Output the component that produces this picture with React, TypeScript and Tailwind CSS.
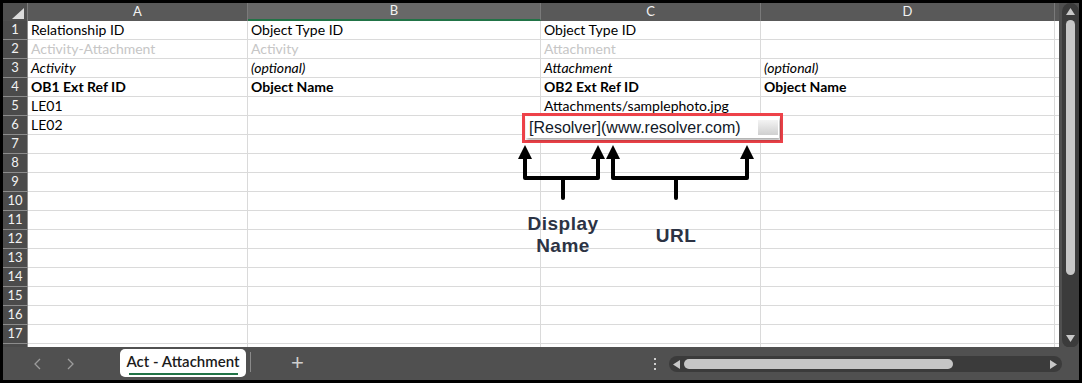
import React from "react";

const cols = [
  { key: "A", w: "w-[220px]" },
  { key: "B", w: "w-[293px]" },
  { key: "C", w: "w-[220px]" },
  { key: "D", w: "w-[294px]" },
];

type Row = { cells: string[]; style: string };

const rows: Row[] = [
  { cells: ["Relationship ID", "Object Type ID", "Object Type ID", ""], style: "text-black" },
  { cells: ["Activity-Attachment", "Activity", "Attachment", ""], style: "text-[#c6c6c6]" },
  { cells: ["Activity", "(optional)", "Attachment", "(optional)"], style: "text-black italic" },
  { cells: ["OB1 Ext Ref ID", "Object Name", "OB2 Ext Ref ID", "Object Name"], style: "text-black font-bold" },
  { cells: ["LE01", "", "Attachments/samplephoto.jpg", ""], style: "text-black" },
  { cells: ["LE02", "", "", ""], style: "text-black" },
];

function HeaderRow() {
  return (
    <div className="flex h-[18px] shrink-0">
      <div className="relative w-[25px] shrink-0 bg-[#4f4f4f] border-r border-[#7a7a7a]">
        <svg className="absolute right-[3px] bottom-[2px]" width="12" height="11" viewBox="0 0 12 11">
          <polygon points="12,0 12,11 0,11" fill="#dcdcdc" />
        </svg>
      </div>
      {cols.map((c) => (
        <div
          key={c.key}
          className={`${c.w} shrink-0 flex items-center justify-center text-[13px] text-[#f2f2f2] border-r border-[#7a7a7a] ${
            c.key === "B" ? "bg-[#686868] border-b-2 border-b-[#217346]" : "bg-[#595959]"
          }`}
        >
          {c.key}
        </div>
      ))}
      <div className="flex-1 bg-[#595959]" />
    </div>
  );
}

function GridRow({ n, row }: { n?: number; row?: Row }) {
  return (
    <div className="flex h-[19px] shrink-0">
      <div className="w-[25px] shrink-0 bg-[#4b4b4b] border-r border-b border-[#8c8c8c] flex items-center justify-center text-[13px] text-[#f2f2f2]">
        {n}
      </div>
      {cols.map((c, i) => (
        <div
          key={c.key}
          className={`${c.w} shrink-0 bg-white border-r border-b border-[#dadada] pl-[3px] flex items-end pb-[1px] text-[14px] leading-[16px] whitespace-nowrap overflow-hidden ${row?.style ?? ""}`}
        >
          {row?.cells[i] ?? ""}
        </div>
      ))}
      <div className="flex-1 bg-white border-b border-[#dadada]" />
    </div>
  );
}

function VScroll() {
  return (
    <div className="w-[20px] shrink-0 bg-[#505050] pl-[3px]">
      <div className="h-[345px] w-[17px] rounded-full bg-[#3b3b3b] flex flex-col items-center pt-[5px] pb-[6px]">
        <svg width="9" height="7" viewBox="0 0 9 7">
          <polygon points="4.5,0 9,7 0,7" fill="#c8c8c8" />
        </svg>
        <div className="mt-[5px] h-[255px] w-[9px] rounded-full bg-[#c6c6c6]" />
        <div className="flex-1" />
        <svg width="9" height="7" viewBox="0 0 9 7">
          <polygon points="0,0 9,0 4.5,7" fill="#c8c8c8" />
        </svg>
      </div>
    </div>
  );
}

function TabBar() {
  return (
    <div className="h-[33px] shrink-0 bg-[#505050] flex items-start relative">
      <div className="flex items-center h-[33px] pl-[30px] gap-[22px]">
        <svg width="10" height="14" viewBox="0 0 10 14">
          <polyline points="7,2 2,7 7,12" fill="none" stroke="#9c9c9c" strokeWidth="1.3" />
        </svg>
        <svg width="10" height="14" viewBox="0 0 10 14">
          <polyline points="3,2 8,7 3,12" fill="none" stroke="#9c9c9c" strokeWidth="1.3" />
        </svg>
      </div>
      <div className="ml-[45px] mt-[2px] h-[28px] w-[126px] bg-white rounded-[5px] flex flex-col items-center justify-center">
        <span className="font-['Lato',sans-serif] font-semibold text-[15px] leading-[17px] text-[#1b1b1b] pt-[1px]">
          Act - Attachment
        </span>
        <div className="mt-[3px] h-[2px] w-[109px] bg-[#217346]" />
      </div>
      <div className="ml-[4px] mt-[5px] h-[20px] w-px bg-[#8a8a8a]" />
      <div className="ml-[40px] mt-[6px] text-[#cfcfcf] text-[22px] leading-[20px] font-light font-['Liberation_Sans',sans-serif]">+</div>
      <div className="flex-1" />
      <div className="mt-[11px] mr-[13px] flex flex-col gap-[3px]">
        <div className="w-[2px] h-[2px] bg-[#d0d0d0]" />
        <div className="w-[2px] h-[2px] bg-[#d0d0d0]" />
        <div className="w-[2px] h-[2px] bg-[#d0d0d0]" />
      </div>
      <div className="mt-[9px] mr-[17px] h-[16px] w-[393px] rounded-full bg-[#3b3b3b] flex items-center pl-[4px] pr-[5px]">
        <svg width="7" height="9" viewBox="0 0 7 9">
          <polygon points="0,4.5 7,0 7,9" fill="#c8c8c8" />
        </svg>
        <div className="ml-[4px] h-[10px] w-[269px] rounded-full bg-[#c6c6c6]" />
        <div className="flex-1" />
        <svg width="7" height="9" viewBox="0 0 7 9">
          <polygon points="0,0 7,4.5 0,9" fill="#c8c8c8" />
        </svg>
      </div>
    </div>
  );
}

function Annotation() {
  return (
    <>
      <div className="absolute left-[522px] top-[113px] w-[261px] h-[30px] border-[3px] border-[#ee4249] bg-white">
        <div className="absolute left-[1px] top-[1px] w-[253px] h-[21px] bg-white shadow-[1px_2px_3px_rgba(0,0,0,0.35)] flex items-center pl-[3px] font-['Liberation_Sans',sans-serif] text-[16px] text-[#111827] whitespace-nowrap">
          [Resolver](www.resolver.com)
          <div className="absolute right-[1px] top-[3px] w-[20px] h-[15px] bg-gradient-to-b from-[#f4f4f4] to-[#cfcfcf]" />
        </div>
      </div>
      <svg className="absolute left-[510px] top-[140px]" width="250" height="64" viewBox="510 140 250 64">
        <g fill="none" stroke="#000" strokeWidth="4" strokeLinejoin="round" strokeLinecap="round">
          <polyline points="525,157 525,178 598,178 598,157" />
          <line x1="563" y1="178" x2="563" y2="198" />
          <polyline points="613,157 613,178 747,178 747,157" />
          <line x1="676" y1="178" x2="676" y2="198" />
        </g>
        <g fill="#000">
          <polygon points="525,145 532,159 518,159" />
          <polygon points="598,145 605,159 591,159" />
          <polygon points="613,145 620,159 606,159" />
          <polygon points="747,145 754,159 740,159" />
        </g>
      </svg>
      <div className="absolute left-[513px] top-[213px] w-[100px] text-center font-['Liberation_Sans',sans-serif] font-bold text-[19px] leading-[22px] tracking-[0.5px] text-[#2c3344]">
        Display
        <br />
        Name
      </div>
      <div className="absolute left-[626px] top-[225px] w-[100px] text-center font-['Liberation_Sans',sans-serif] font-bold text-[19px] leading-[22px] tracking-[0.5px] text-[#2c3344]">
        URL
      </div>
    </>
  );
}

export default function App() {
  return (
    <div className="relative w-[1082px] h-[383px] bg-black pt-[3px] pl-[3px] pr-[3px] pb-[3px] font-['Lato',sans-serif] overflow-hidden">
      <div className="flex flex-col h-[377px]">
        <div className="flex h-[344px] shrink-0">
          <div className="flex-1 flex flex-col overflow-hidden bg-white">
            <HeaderRow />
            {Array.from({ length: 17 }, (_, i) => (
              <GridRow key={i} n={i + 1} row={rows[i]} />
            ))}
            <GridRow />
          </div>
          <VScroll />
        </div>
        <TabBar />
      </div>
      <Annotation />
    </div>
  );
}
